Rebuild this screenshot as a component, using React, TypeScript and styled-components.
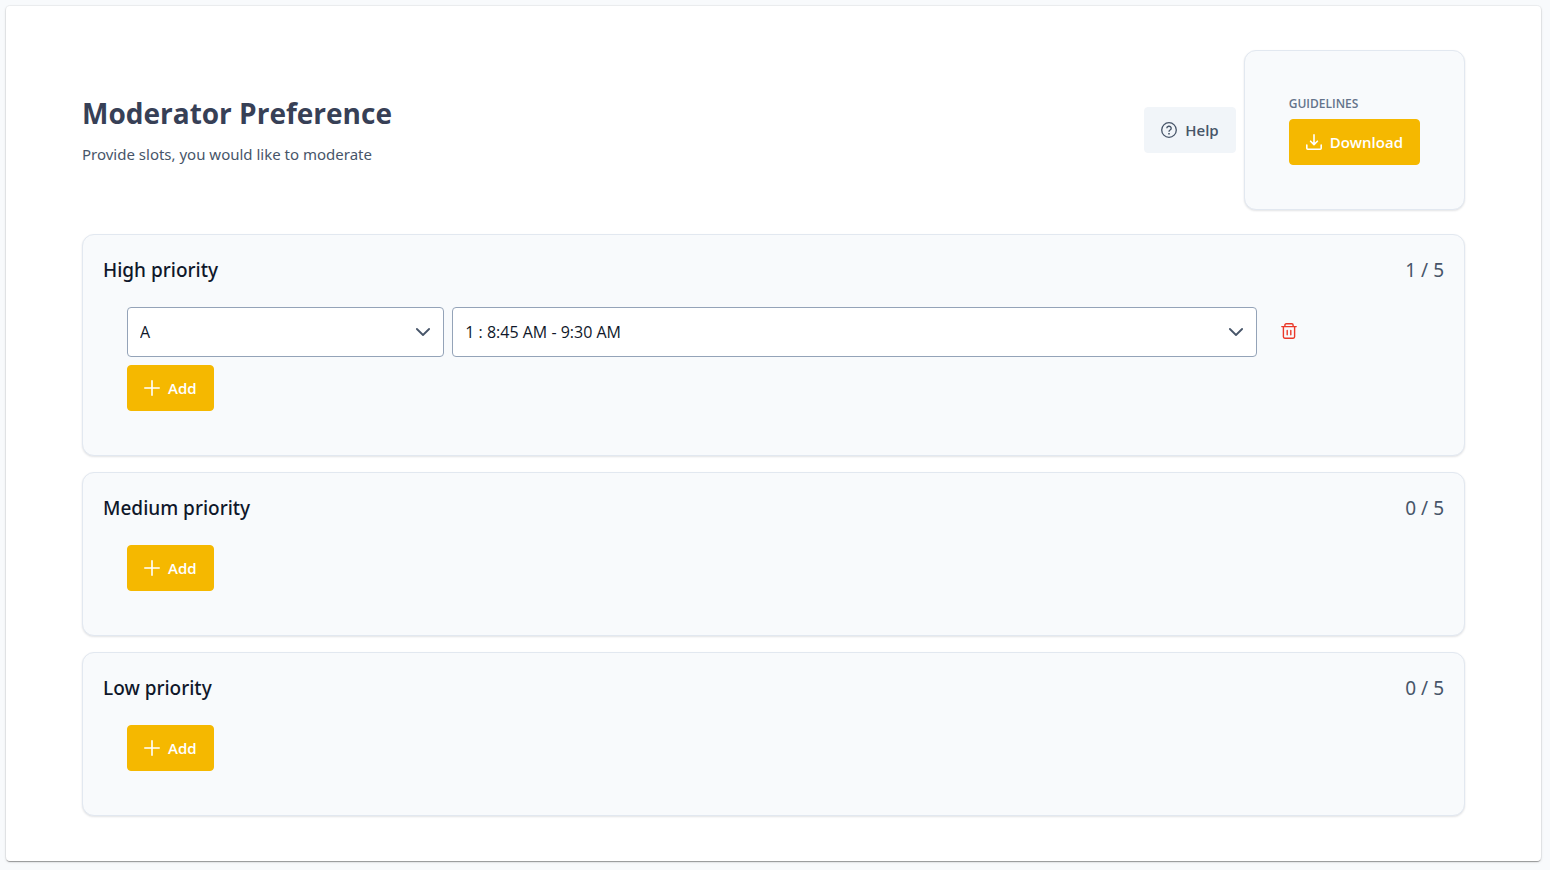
import React, { useState } from "react";
import styled, { createGlobalStyle } from "styled-components";

const GlobalStyle = createGlobalStyle`
  *, *::before, *::after { box-sizing: border-box; }
  body {
    margin: 0;
    background: #f8fafc;
    color: #0f172a;
    font-family: "Segoe UI", "Noto Sans", sans-serif;
    font-size: 15px;
    line-height: 24px;
  }
  button, select { font: inherit; }
`;

const Page = styled.main`
  margin: 6px 9px 9px 6px;
  padding: 44px 76px;
  background: #fff;
  border-bottom: 1px solid #fff;
  border-radius: 4px;
  box-shadow:
    0 2px 1px -1px rgba(0, 0, 0, 0.2),
    0 1px 1px 0 rgba(0, 0, 0, 0.14),
    0 0 0 1px rgba(0, 0, 0, 0.04),
    0 1px 3px 0 rgba(0, 0, 0, 0.12);
`;

const Header = styled.header`
  display: flex;
  align-items: center;
  justify-content: space-between;
  margin-bottom: 24px;
`;

const Title = styled.h1`
  margin: 0 0 10px;
  color: #374056;
  font-family: "Segoe UI", "Open Sans", sans-serif;
  font-size: 28px;
  line-height: 38px;
  font-weight: 700;
`;

const Subtitle = styled.p`
  margin: 0;
  color: #475569;
`;

const HeaderActions = styled.div`
  display: flex;
  align-items: center;
  gap: 8px;
`;

const Card = styled.section`
  background: #f8fafc;
  border: 1px solid #e2e8f0;
  border-radius: 12px;
  box-shadow: 0 1px 2px rgba(15, 23, 42, 0.12);
`;

const GuidelinesCard = styled(Card)`
  padding: 44px;
`;

const Overline = styled.h2`
  margin: 0;
  padding-bottom: 6px;
  color: #64748b;
  font-family: "Segoe UI", "Open Sans", sans-serif;
  font-size: 12px;
  line-height: 18px;
  font-weight: 600;
  text-transform: uppercase;
`;

const Button = styled.button<{ $variant?: "primary" | "subtle" }>`
  display: flex;
  align-items: center;
  gap: 8px;
  height: 46px;
  padding: 0 16px;
  border: 1px solid;
  border-color: ${(p) => (p.$variant === "subtle" ? "#f1f5f9" : "#f5b800")};
  border-radius: 4px;
  background: ${(p) => (p.$variant === "subtle" ? "#f1f5f9" : "#f5b800")};
  color: ${(p) => (p.$variant === "subtle" ? "#475569" : "#fff")};
  font-family: "Segoe UI", "Open Sans", sans-serif;
  font-weight: 600;
  cursor: pointer;
`;

const Sections = styled.div`
  display: grid;
  gap: 16px;
`;

const SectionHeader = styled.div`
  display: flex;
  justify-content: space-between;
  padding: 20px 20px 22px;
  font-size: 19px;
  line-height: 30px;
`;

const SectionTitle = styled.h2`
  margin: 0;
  font: inherit;
  font-weight: 500;
`;

const Count = styled.span`
  color: #475569;
`;

const SectionBody = styled.div`
  display: grid;
  gap: 8px;
  justify-items: start;
  padding: 0 44px 44px;
`;

const SlotRow = styled.div`
  display: grid;
  grid-template-columns: repeat(8, minmax(0, 1fr));
  gap: 8px;
  width: 100%;
`;

const SelectField = styled.label<{ $span: number }>`
  position: relative;
  grid-column: span ${(p) => p.$span};
  color: #475569;

  svg {
    position: absolute;
    top: 17px;
    right: 13px;
    pointer-events: none;
  }
`;

const Select = styled.select`
  appearance: none;
  display: block;
  width: 100%;
  height: 50px;
  padding: 0 40px 0 12px;
  border: 1px solid #94a3b8;
  border-radius: 4px;
  background: #fff;
  color: #0f172a;
  font-family: "Segoe UI", "Open Sans", sans-serif;
  font-size: 16px;
`;

const IconButton = styled.button`
  display: grid;
  place-items: center;
  width: 48px;
  height: 48px;
  padding: 0;
  border: 0;
  background: none;
  color: #ea3829;
  cursor: pointer;
`;

const iconProps = {
  width: 16,
  height: 16,
  viewBox: "0 0 16 16",
  fill: "none",
  stroke: "currentColor",
  "aria-hidden": true,
} as const;

const HelpIcon = () => (
  <svg {...iconProps} strokeWidth="1.3">
    <circle cx="8" cy="8" r="7.3" />
    <path d="M5.8 6.3a2.2 2 0 1 1 3.3 1.7C8.3 8.5 8 8.8 8 9.7" strokeWidth="1.4" />
    <path d="M8 10.9v1.5" strokeWidth="1.6" />
  </svg>
);

const DownloadIcon = () => (
  <svg {...iconProps} strokeWidth="1.6" strokeLinecap="round" strokeLinejoin="round">
    <path d="M8 .9v9.6M4.6 7.2 8 10.6l3.4-3.4M.8 11v3.2c0 .6.4 1 1 1h12.4c.6 0 1-.4 1-1V11" />
  </svg>
);

const PlusIcon = () => (
  <svg {...iconProps} strokeWidth="1.6" strokeLinecap="round">
    <path d="M8 .8v14.4M.8 8h14.4" />
  </svg>
);

const ChevronIcon = () => (
  <svg {...iconProps} strokeWidth="1.8" strokeLinecap="round" strokeLinejoin="round">
    <path d="m1.9 5 6.1 6 6.1-6" />
  </svg>
);

const TrashIcon = () => (
  <svg {...iconProps} strokeWidth="1.4" strokeLinecap="round" strokeLinejoin="round">
    <path d="M.8 3.6h14.4M2.4 3.6v10.2c0 .8.6 1.4 1.4 1.4h8.4c.8 0 1.4-.6 1.4-1.4V3.6M3.9 3.4V2c0-.7.5-1.2 1.2-1.2h5.8c.7 0 1.2.5 1.2 1.2v1.4M6.2 7.4v4.4M9.8 7.4v4.4" />
  </svg>
);

type Slot = { room: string; time: string };

const ROOMS = ["A", "B", "C"];
const TIMES = ["1 : 8:45 AM - 9:30 AM", "2 : 9:45 AM - 10:30 AM", "3 : 10:45 AM - 11:30 AM"];
const LIMIT = 5;

function PrioritySection({ title, initial }: { title: string; initial: Slot[] }) {
  const [slots, setSlots] = useState(initial);

  const update = (index: number, change: Partial<Slot>) =>
    setSlots(slots.map((slot, i) => (i === index ? { ...slot, ...change } : slot)));

  return (
    <Card>
      <SectionHeader>
        <SectionTitle>{title}</SectionTitle>
        <Count>
          {slots.length} / {LIMIT}
        </Count>
      </SectionHeader>
      <SectionBody>
        {slots.map((slot, i) => (
          <SlotRow key={i}>
            <SelectField $span={2}>
              <Select aria-label="Room" value={slot.room} onChange={(e) => update(i, { room: e.target.value })}>
                {ROOMS.map((room) => (
                  <option key={room}>{room}</option>
                ))}
              </Select>
              <ChevronIcon />
            </SelectField>
            <SelectField $span={5}>
              <Select aria-label="Time slot" value={slot.time} onChange={(e) => update(i, { time: e.target.value })}>
                {TIMES.map((time) => (
                  <option key={time}>{time}</option>
                ))}
              </Select>
              <ChevronIcon />
            </SelectField>
            <IconButton
              type="button"
              aria-label="Remove slot"
              onClick={() => setSlots(slots.filter((_, index) => index !== i))}
            >
              <TrashIcon />
            </IconButton>
          </SlotRow>
        ))}
        <Button
          type="button"
          disabled={slots.length >= LIMIT}
          onClick={() => setSlots([...slots, { room: ROOMS[0], time: TIMES[0] }])}
        >
          <PlusIcon />
          Add
        </Button>
      </SectionBody>
    </Card>
  );
}

export default function App() {
  return (
    <>
      <GlobalStyle />
      <Page>
        <Header>
          <div>
            <Title>Moderator Preference</Title>
            <Subtitle>Provide slots, you would like to moderate</Subtitle>
          </div>
          <HeaderActions>
            <Button type="button" $variant="subtle">
              <HelpIcon />
              Help
            </Button>
            <GuidelinesCard>
              <Overline>Guidelines</Overline>
              <Button type="button">
                <DownloadIcon />
                Download
              </Button>
            </GuidelinesCard>
          </HeaderActions>
        </Header>
        <Sections>
          <PrioritySection title="High priority" initial={[{ room: ROOMS[0], time: TIMES[0] }]} />
          <PrioritySection title="Medium priority" initial={[]} />
          <PrioritySection title="Low priority" initial={[]} />
        </Sections>
      </Page>
    </>
  );
}
